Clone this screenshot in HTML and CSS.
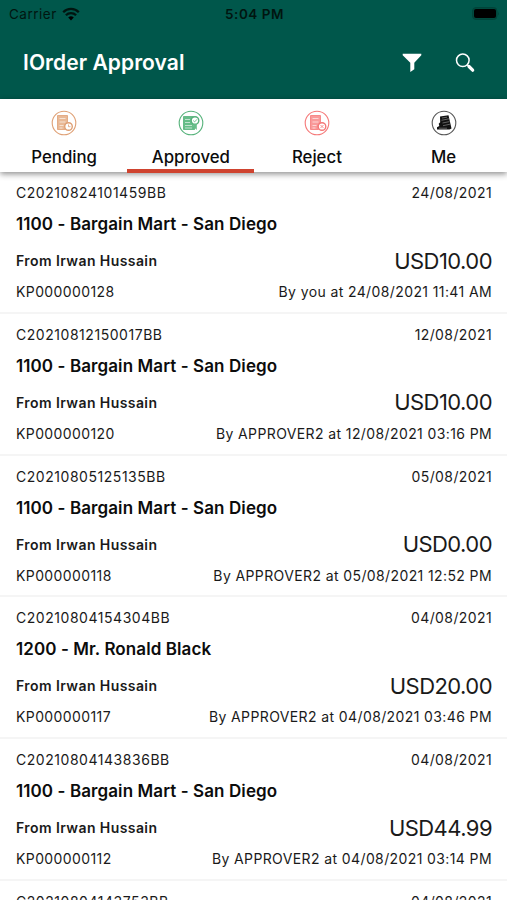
FILE: index.html
```
<!DOCTYPE html>
<html lang="en">
<head>
<meta charset="utf-8">
<title>IOrder Approval</title>
<link rel="stylesheet" href="styles.css">
</head>
<body>
<header class="header">
  <div class="status">
    <div class="carrier"><span>Carrier</span>
      <svg class="wifi" viewBox="0 0 18 14"><path d="M9 13.6 6.2 10.6a4 4 0 0 1 5.6 0z"/><path class="arc" d="M3.9 8.3a7.2 7.2 0 0 1 10.2 0M1.2 5.2a11 11 0 0 1 15.6 0"/></svg>
    </div>
    <span class="time">5:04 PM</span>
    <svg class="battery" viewBox="0 0 28 13"><rect class="shell" x=".5" y=".5" width="24.5" height="12" rx="3.5"/><rect x="2" y="2" width="22" height="9" rx="2"/><path class="tip" d="M26 4.5q1.5 2 0 4z"/></svg>
  </div>
  <div class="bar">
    <h1>IOrder Approval</h1>
    <svg class="filter" viewBox="0 0 20 20"><path d="M.7 .7h18.6v1.500l-7 7.600v6.500l-4 2.800v-9.300l-7.600-7.600z"/></svg>
    <svg class="search" viewBox="0 0 20 20"><circle cx="7.800" cy="7.300" r="6.300"/><path class="neck" d="m12.300 11.800 2 2"/><path class="handle" d="m14 13.500 3.700 3.700"/></svg>
  </div>
</header>
<nav class="tabs">
  <a class="tab pending">
    <svg viewBox="0 0 26 26"><circle class="ring" cx="13" cy="13" r="11.800"/><path class="doc" d="M6.500 5.500h10v7a4.500 4.500 0 0 0-2 7h-8z"/><path class="line" d="M8.500 8.500h6M8.500 12h6M8.500 15.500h4M8.500 18h3"/><circle class="seal" cx="17.500" cy="16.500" r="3.800"/><path class="line mark" d="M17.500 14.500v2.200h2"/></svg>
    <span>Pending</span></a>
  <a class="tab approved active">
    <svg viewBox="0 0 26 26"><circle class="ring" cx="13" cy="13" r="11.800"/><path class="doc" d="M5.500 6.500h10v9l1 4h-11z"/><path class="line" d="M7 9.500h5M7 12.500h5M7 15.500h7M7 18h7"/><circle class="seal" cx="17" cy="10.500" r="3.800"/><path class="stem" d="m15.500 14 .5 6 1.300-1.400 1.500 1.400v-6"/><path class="line mark" d="m15.200 10.500 1.400 1.400 2.400-2.600"/></svg>
    <span>Approved</span></a>
  <a class="tab reject">
    <svg viewBox="0 0 26 26"><circle class="ring" cx="13" cy="13" r="11.800"/><path class="doc" d="M6.500 5.500h10v7a4.500 4.500 0 0 0-2 7h-8z"/><path class="line" d="M8.500 8.500h6M8.500 12h6M8.500 15.500h4M8.500 18h3"/><circle class="seal" cx="18" cy="16.500" r="3.800"/><path class="line mark" d="m16.500 15 3 3m0-3-3 3"/></svg>
    <span>Reject</span></a>
  <a class="tab me">
    <svg viewBox="0 0 26 26"><circle class="ring" cx="13" cy="13" r="11.800"/><path class="solid" d="m9 6.500 8.500-1.200 3 13.200-2 .9H6v-2.200l2.300-1.300-.6-2.200 1.500-1.500z"/><path class="slit" d="m10.500 10.300 7.500-1.500M11.500 13l7-1.400M12 15.700l7-1.500M11 8l5-.8M8 18.200h8"/></svg>
    <span>Me</span></a>
</nav>
<main class="list">
  <article class="order">
    <span class="code">C20210824101459BB</span><span class="date">24/08/2021</span>
    <h2>1100 - Bargain Mart - San Diego</h2>
    <span class="from">From Irwan Hussain</span><span class="amount">USD10.00</span>
    <span class="ref">KP000000128</span><span class="by">By you at 24/08/2021 11:41 AM</span>
  </article>
  <article class="order">
    <span class="code">C20210812150017BB</span><span class="date">12/08/2021</span>
    <h2>1100 - Bargain Mart - San Diego</h2>
    <span class="from">From Irwan Hussain</span><span class="amount">USD10.00</span>
    <span class="ref">KP000000120</span><span class="by">By APPROVER2 at 12/08/2021 03:16 PM</span>
  </article>
  <article class="order">
    <span class="code">C20210805125135BB</span><span class="date">05/08/2021</span>
    <h2>1100 - Bargain Mart - San Diego</h2>
    <span class="from">From Irwan Hussain</span><span class="amount">USD0.00</span>
    <span class="ref">KP000000118</span><span class="by">By APPROVER2 at 05/08/2021 12:52 PM</span>
  </article>
  <article class="order">
    <span class="code">C20210804154304BB</span><span class="date">04/08/2021</span>
    <h2>1200 - Mr. Ronald Black</h2>
    <span class="from">From Irwan Hussain</span><span class="amount">USD20.00</span>
    <span class="ref">KP000000117</span><span class="by">By APPROVER2 at 04/08/2021 03:46 PM</span>
  </article>
  <article class="order">
    <span class="code">C20210804143836BB</span><span class="date">04/08/2021</span>
    <h2>1100 - Bargain Mart - San Diego</h2>
    <span class="from">From Irwan Hussain</span><span class="amount">USD44.99</span>
    <span class="ref">KP000000112</span><span class="by">By APPROVER2 at 04/08/2021 03:14 PM</span>
  </article>
  <article class="order">
    <span class="code">C20210804143753BB</span><span class="date">04/08/2021</span>
  </article>
</main>
</body>
</html>
```
FILE: styles.css
```
* { box-sizing: border-box; }
body {
  margin: 0;
  height: 900px;
  overflow: hidden;
  display: flex;
  flex-direction: column;
  background: #fff;
  color: #1a1a1a;
  font-family: Inter, "Liberation Sans", sans-serif;
}
h1, h2 { margin: 0; }
.header { flex: none; height: 98.500px; background: #00574b; }
.status {
  height: 27px;
  padding: 0 7px 0 9px;
  display: grid;
  grid-template-columns: 1fr auto 1fr;
  align-items: center;
  font-size: 13px;
  color: #001510;
}
.carrier { display: flex; align-items: center; gap: 5px; font-size: 13.500px; letter-spacing: .5px; }
.wifi { width: 18px; height: 14px; }
.wifi .arc { fill: none; stroke: #001510; stroke-width: 2.300; }
.time { font-size: 13.500px; font-weight: 600; letter-spacing: .5px; }
.battery { width: 28px; height: 13px; justify-self: end; fill: #000; }
.battery .shell { fill: #004a3e; stroke: #00443a; }
.battery .tip { fill: #00443a; }
.bar {
  height: 71px;
  padding: 0 32px 0 23px;
  display: flex;
  align-items: center;
}
.bar h1 {
  flex: 1;
  color: #fff;
  font-size: 21px;
  line-height: 28px;
  font-weight: 600;
  letter-spacing: .07px;
}
.bar svg { width: 20px; height: 20px; }
.filter { fill: #fff; margin-right: 33px; }
.search { fill: none; stroke: #fff; stroke-width: 1.500; }
.search .handle { stroke-width: 3.200; stroke-linecap: round; }
.tabs {
  flex: none;
  height: 73.500px;
  display: grid;
  grid-template-columns: repeat(4, 1fr);
  background: #fff;
  box-shadow: 0 2px 6px rgba(0, 0, 0, .45);
  position: relative;
}
.tab {
  display: flex;
  flex-direction: column;
  align-items: center;
  padding-top: 11.500px;
  border-bottom: 4px solid transparent;
  font-size: 16.800px;
  line-height: 24px;
  font-weight: 500;
  color: #0c0c0c;
}
.pending, .approved { padding-left: 1.500px; }
.tab.active { border-color: #cf432f; }
.tab svg { width: 26px; height: 26px; margin-bottom: 9px; }
.pending { --ink: #dfa075; --tint: #e9b996; }
.approved { --ink: #55b27a; --tint: #67bd89; }
.reject { --ink: #f57878; --tint: #f99a9a; }
.me { --ink: #555; --tint: #111; }
.ring { fill: #fff; stroke: var(--ink); stroke-width: 1.100; }
.doc { fill: var(--tint); stroke: var(--ink); stroke-width: .8; }
.line { fill: none; stroke: #fff; stroke-width: .8; opacity: .75; }
.seal { fill: #fff; stroke: var(--ink); stroke-width: 1.400; }
.stem { fill: var(--tint); }
.line.mark { stroke: var(--ink); opacity: 1; }
.solid { fill: #111; }
.slit { fill: none; stroke: #999; stroke-width: .6; }
.list { flex: 1; min-height: 0; overflow: hidden; }
.order {
  height: 141.750px;
  padding: 9px 15px 0 16px;
  display: grid;
  grid-template-columns: auto 1fr;
  grid-template-rows: 23px 40px 33px 29px;
  align-items: center;
  border-bottom: 2px solid #f5f5f5;
  font-size: 14px;
  letter-spacing: .39px;
  white-space: nowrap;
}
.code { letter-spacing: .54px; }
.date, .amount, .by { justify-self: end; }
.order h2 { grid-column: 1 / -1; font-size: 17px; font-weight: 600; letter-spacing: .09px; color: #0c0c0c; }
.from { font-weight: 600; letter-spacing: .42px; }
.amount { font-size: 22px; letter-spacing: -.55px; }
```
